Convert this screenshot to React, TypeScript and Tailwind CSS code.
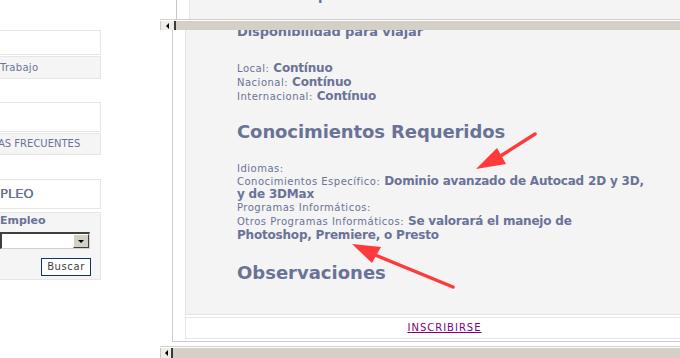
import React from "react";

function Row({ cls, label, value }: { cls: string; label: string; value?: string }) {
  return (
    <div className={"whitespace-nowrap text-[12px] font-bold tracking-[-0.2px] " + cls}>
      <span className="text-[10px] font-normal tracking-[0.5px]">{label}</span>
      {value ? " " + value : null}
    </div>
  );
}

function Tri({ dir }: { dir: "left" | "down" }) {
  if (dir === "left")
    return <div className="h-0 w-0 border-y-[3px] border-r-[3px] border-y-transparent border-r-black" />;
  return <div className="h-0 w-0 border-x-[3px] border-t-[3px] border-x-transparent border-t-black" />;
}

export default function App() {
  return (
    <div className="relative h-[358px] w-[680px] overflow-hidden bg-white font-['DejaVu_Sans',Verdana,sans-serif] text-[#6a7298]">
      {/* top strip (previous scroll position) */}
      <div className="flex h-[19px] overflow-hidden">
        <div className="w-[176px] shrink-0" />
        <div className="w-px shrink-0 bg-[#c8c8c8]" />
        <div className="w-[12px] shrink-0" />
        <div className="flex-1 overflow-hidden border-l border-[#e4e4e4] bg-[#f4f4f4] pl-[128px]">
          <div className="-mt-[12px] h-[16px] text-[13px] font-bold leading-[16px]">p</div>
        </div>
      </div>

      {/* top horizontal scrollbar */}
      <div className="flex h-[11px]">
        <div className="w-[160px] shrink-0" />
        <div className="flex flex-1 flex-col">
          <div className="h-px bg-[#d4d0c8]" />
          <div className="h-px bg-white" />
          <div className="flex flex-1">
            <div className="flex w-[14px] items-center justify-center border-l border-[#c8c8c8] bg-[#eeede9]">
              <Tri dir="left" />
            </div>
            <div className="w-[2px] bg-[#3a3a3a]" />
            <div className="flex-1 bg-[#d4d0c8]" />
          </div>
        </div>
      </div>

      {/* main area */}
      <div className="flex h-[316px]">
        {/* sidebar */}
        <aside className="flex w-[101px] shrink-0 flex-col text-[10px]">
          <div className="h-[25px] border-y border-r border-[#e6e6e6] bg-white" />
          <div className="mt-[1px] h-[23px] whitespace-nowrap border-y border-r border-[#e6e6e6] bg-[#f5f5f5] leading-[21px] tracking-[0.3px]">
            Trabajo
          </div>
          <div className="mt-[23px] h-[30px] border-y border-r border-[#e6e6e6] bg-white" />
          <div className="mt-[1px] h-[22px] overflow-hidden whitespace-nowrap border-y border-r border-[#e6e6e6] bg-[#f5f5f5] leading-[20px]">
            <span className="-ml-[2px]">AS FRECUENTES</span>
          </div>
          <div className="mt-[24px] h-[30px] whitespace-nowrap border-y border-r border-[#e6e6e6] bg-white text-[13px] leading-[28px] [text-shadow:0.3px_0_0_#6a7298]">
            PLEO
          </div>
          <div className="mt-[3px] flex h-[68px] flex-col border-y border-r border-[#e6e6e6] bg-[#f5f5f5] pt-[1px]">
            <div className="h-[13px] whitespace-nowrap text-[11px] font-bold leading-[13px]">Empleo</div>
            <div className="mt-[5px] flex h-[17px] w-[90px] border-l-2 border-t-2 border-b border-r border-l-[#404040] border-t-[#404040] border-b-[#d4d0c8] border-r-[#d4d0c8] bg-white">
              <div className="flex-1" />
              <div className="flex w-[16px] items-center justify-center border border-b-[#404040] border-l-white border-r-[#404040] border-t-white bg-[#d4d0c8]">
                <Tri dir="down" />
              </div>
            </div>
            <div className="mr-[9px] mt-[9px] h-[18px] w-[50px] self-end border border-[#0a3566] bg-white text-center text-[10px] leading-[16px] tracking-[0.6px] text-[#404040]">
              Buscar
            </div>
          </div>
        </aside>

        <div className="w-[71px] shrink-0" />

        {/* content box */}
        <div className="flex h-[312px] min-w-0 flex-1 flex-col border-b border-l border-[#cccccc] pl-[12px]">
          <div className="flex h-[285px] w-[519px] shrink-0 flex-col overflow-hidden border-b border-l border-[#e4e4e4] bg-[#f4f4f4] pl-[51px]">
            <div className="-mt-[6px] h-[16px] whitespace-nowrap text-[13px] font-bold leading-[16px] tracking-[-0.1px]">
              Disponibilidad para viajar
            </div>
            <div className="mt-[21px] flex flex-col">
              <Row cls="h-[14px] leading-[14px]" label="Local:" value="Contínuo" />
              <Row cls="h-[14px] leading-[14px]" label="Nacional:" value="Contínuo" />
              <Row cls="h-[14px] leading-[14px]" label="Internacional:" value="Contínuo" />
            </div>
            <div className="mt-[18px] h-[22px] whitespace-nowrap text-[18px] font-bold leading-[22px] tracking-[-0.1px]">
              Conocimientos Requeridos
            </div>
            <div className="mt-[18px] flex flex-col">
              <Row cls="h-[14px] leading-[14px]" label="Idiomas:" />
              <Row
                cls="h-[13px] leading-[13px]"
                label="Conocimientos Específico:"
                value="Dominio avanzado de Autocad 2D y 3D,"
              />
              <div className="h-[12px] whitespace-nowrap text-[12px] font-bold leading-[12px] tracking-[-0.2px]">
                y de 3DMax
              </div>
              <Row cls="h-[14px] leading-[14px]" label="Programas Informáticos:" />
              <Row
                cls="h-[14px] leading-[14px]"
                label="Otros Programas Informáticos:"
                value="Se valorará el manejo de"
              />
              <div className="h-[14px] whitespace-nowrap text-[12px] font-bold leading-[14px] tracking-[-0.2px]">
                Photoshop, Premiere, o Presto
              </div>
            </div>
            <div className="mt-[20px] h-[22px] whitespace-nowrap text-[18px] font-bold leading-[22px]">
              Observaciones
            </div>
          </div>
          <div className="mt-[2px] h-[22px] w-[519px] shrink-0 border border-[#e4e4e4] bg-white text-center text-[10px] leading-[20px] tracking-[1px]">
            <a href="#" className="text-[#800080] underline">
              INSCRIBIRSE
            </a>
          </div>
        </div>
      </div>

      {/* bottom horizontal scrollbar */}
      <div className="flex h-[12px]">
        <div className="w-[160px] shrink-0" />
        <div className="flex flex-1 flex-col">
          <div className="h-px bg-[#d4d0c8]" />
          <div className="h-px bg-white" />
          <div className="flex flex-1">
            <div className="flex w-[11px] items-center justify-center border-l border-[#c8c8c8] bg-[#eeede9]">
              <Tri dir="left" />
            </div>
            <div className="w-[2px] bg-[#3a3a3a]" />
            <div className="flex-1 bg-[#d4d0c8]" />
          </div>
        </div>
      </div>

      {/* red annotation arrows */}
      <svg className="pointer-events-none absolute left-0 top-0" width="680" height="358" viewBox="0 0 680 358">
        <line x1="535" y1="134" x2="499" y2="157" stroke="#fe3a3a" strokeWidth="3.5" strokeLinecap="round" />
        <polygon points="476,169 497,148 506,164" fill="#fe3a3a" />
        <line x1="453" y1="287" x2="375" y2="255" stroke="#fe3a3a" strokeWidth="3.5" strokeLinecap="round" />
        <polygon points="352,244 381,247 372,263" fill="#fe3a3a" />
      </svg>
    </div>
  );
}
